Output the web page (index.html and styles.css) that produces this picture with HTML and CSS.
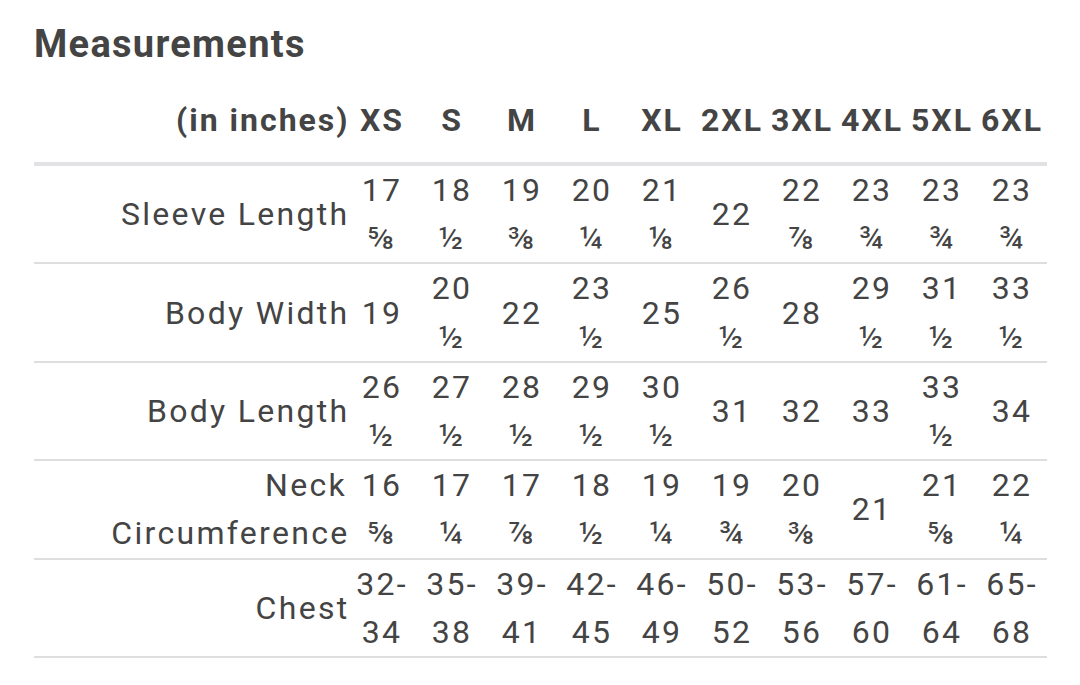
FILE: index.html
```html
<!DOCTYPE html>
<html>
<head>
<meta charset="utf-8">
<link rel="stylesheet" href="styles.css">
</head>
<body>
<div class="page">
  <h2 class="title">Measurements</h2>
  <table class="sizes">
    <colgroup>
      <col class="col-label">
      <col class="col-size"><col class="col-size"><col class="col-size"><col class="col-size"><col class="col-size">
      <col class="col-size"><col class="col-size"><col class="col-size"><col class="col-size"><col class="col-size">
    </colgroup>
    <thead>
      <tr>
        <th class="label"><span class="lbl">(in inches)</span></th>
        <th>XS</th><th>S</th><th>M</th><th>L</th><th>XL</th><th>2XL</th><th>3XL</th><th>4XL</th><th>5XL</th><th>6XL</th>
      </tr>
    </thead>
    <tbody>
      <tr>
        <td class="label"><span class="lbl">Sleeve Length</span></td>
        <td>17 ⅝</td><td>18 ½</td><td>19 ⅜</td><td>20 ¼</td><td>21 ⅛</td><td>22</td><td>22 ⅞</td><td>23 ¾</td><td>23 ¾</td><td>23 ¾</td>
      </tr>
      <tr>
        <td class="label"><span class="lbl">Body Width</span></td>
        <td>19</td><td>20 ½</td><td>22</td><td>23 ½</td><td>25</td><td>26 ½</td><td>28</td><td>29 ½</td><td>31 ½</td><td>33 ½</td>
      </tr>
      <tr>
        <td class="label"><span class="lbl">Body Length</span></td>
        <td>26 ½</td><td>27 ½</td><td>28 ½</td><td>29 ½</td><td>30 ½</td><td>31</td><td>32</td><td>33</td><td>33 ½</td><td>34</td>
      </tr>
      <tr>
        <td class="label"><span class="lbl">Neck Circumference</span></td>
        <td>16 ⅝</td><td>17 ¼</td><td>17 ⅞</td><td>18 ½</td><td>19 ¼</td><td>19 ¾</td><td>20 ⅜</td><td>21</td><td>21 ⅝</td><td>22 ¼</td>
      </tr>
      <tr>
        <td class="label"><span class="lbl">Chest</span></td>
        <td>32-34</td><td>35-38</td><td>39-41</td><td>42-45</td><td>46-49</td><td>50-52</td><td>53-56</td><td>57-60</td><td>61-64</td><td>65-68</td>
      </tr>
    </tbody>
  </table>
</div>
</body>
</html>
```

FILE: styles.css
```css
html, body {
  margin: 0;
  padding: 0;
  background: #ffffff;
}

.page {
  padding: 20px 34px 0 34px;
  font-family: Roboto, "Liberation Sans", sans-serif;
  color: #444444;
}

.title {
  margin: 0;
  font-size: 38px;
  font-weight: 700;
  line-height: 48px;
  letter-spacing: 1.3px;
  color: #444444;
}

.sizes {
  border-collapse: collapse;
  table-layout: fixed;
  width: 1013px;
  font-size: 32px;
  line-height: 48.2px;
  letter-spacing: 2.3px;
}

.col-label { width: 313px; }
.col-size { width: 70px; }

.sizes th {
  font-weight: 700;
  line-height: 48px;
  padding: 28px 0 18px;
  text-align: center;
  border-bottom: 4px solid #e2e2e4;
  white-space: nowrap;
  letter-spacing: 2px;
}

.sizes td {
  padding: 0 6px;
  text-align: center;
  vertical-align: middle;
  border-bottom: 2px solid #dedede;
}

.sizes .label {
  text-align: right;
  padding-right: 0;
  padding-left: 0;
}

.lbl {
  margin-right: -2.5px;
}
```
